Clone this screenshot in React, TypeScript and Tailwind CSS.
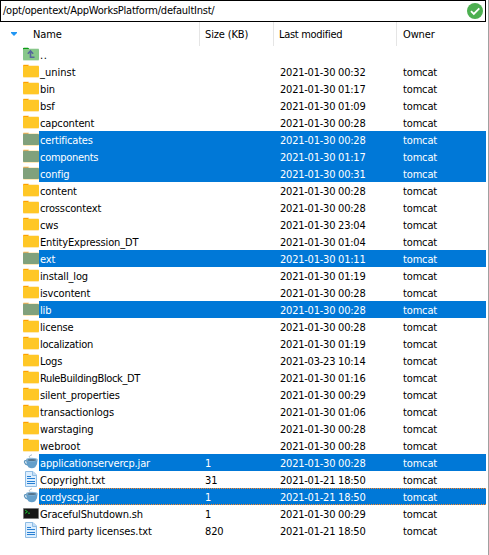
import React from "react";

type Kind = "up" | "folder" | "jar" | "text" | "shell";

interface Entry {
  name: string;
  kind: Kind;
  size?: string;
  modified?: string;
  selected?: boolean;
  focused?: boolean;
  tracking?: string;
}

const folder = (name: string, modified: string, selected = false, tracking = ""): Entry => ({
  name,
  kind: "folder",
  modified: modified.length > 5 ? modified : "2021-01-30 " + modified,
  selected,
  tracking,
});

const entries: Entry[] = [
  { name: "..", kind: "up", tracking: "tracking-[0.5px]" },
  folder("_uninst", "00:32", false, "tracking-[0px]"),
  folder("bin", "01:17"),
  folder("bsf", "01:09"),
  folder("capcontent", "00:28"),
  folder("certificates", "00:28", true, "tracking-[-0.2px]"),
  folder("components", "01:17", true, "tracking-[-0.3px]"),
  folder("config", "00:31", true),
  folder("content", "00:28"),
  folder("crosscontext", "00:28"),
  folder("cws", "23:04"),
  folder("EntityExpression_DT", "01:04"),
  folder("ext", "01:11", true),
  folder("install_log", "01:19"),
  folder("isvcontent", "00:28"),
  folder("lib", "00:28", true),
  folder("license", "00:28"),
  folder("localization", "01:19", false, "tracking-[-0.25px]"),
  folder("Logs", "2021-03-23 10:14"),
  folder("RuleBuildingBlock_DT", "01:16", false, "tracking-[-0.35px]"),
  folder("silent_properties", "00:29"),
  folder("transactionlogs", "01:06"),
  folder("warstaging", "00:28"),
  folder("webroot", "00:28", false, "tracking-[0px]"),
  { name: "applicationservercp.jar", kind: "jar", size: "1", modified: "2021-01-30 00:28", selected: true },
  { name: "Copyright.txt", kind: "text", size: "31", modified: "2021-01-21 18:50", tracking: "tracking-[0px]" },
  { name: "cordyscp.jar", kind: "jar", size: "1", modified: "2021-01-21 18:50", selected: true, focused: true },
  { name: "GracefulShutdown.sh", kind: "shell", size: "1", modified: "2021-01-30 00:29" },
  { name: "Third party licenses.txt", kind: "text", size: "820", modified: "2021-01-21 18:50", tracking: "tracking-[-0.1px]" },
];

function EntryIcon({ kind, selected }: { kind: Kind; selected?: boolean }) {
  return (
    <svg width="16" height="17" viewBox="0 0 16 17" className="block shrink-0">
      {kind === "folder" && (
        <>
          <path d="M0 3V2.3Q0 1.3 1 1.3H5.5L6.5 2.3H15Q16 2.3 16 3.3V14Q16 15 15 15H1Q0 15 0 14Z" fill="#ffe9b8" />
          <path d="M0 4V3Q0 2 1 2H5L6.2 3.2V4Z" fill={selected ? "#d9ac62" : "#ffa000"} />
          <path d="M0 3.6Q0 3 .7 3H15.3Q16 3 16 3.7V13.3Q16 14 15.3 14H.7Q0 14 0 13.3Z" fill={selected ? "#80a17c" : "#ffc726"} />
        </>
      )}
      {kind === "up" && (
        <>
          <path d="M6 2.3H15Q16 2.3 16 3.3V14Q16 15 15 15H1Q0 15 0 14V3H6Z" fill="#d3ead4" />
          <path d="M0 4V2.7Q0 1.7 1 1.7H5L6.2 3V4Z" fill="#0c9d15" />
          <path d="M0 3.6Q0 3 .7 3H15.3Q16 3 16 3.7V13.3Q16 14 15.3 14H.7Q0 14 0 13.3Z" fill="#87c78a" />
          <path d="M0 3Q0 2 1 2H5L6 3Z" fill="#0c9d15" />
          <path d="M7.5 6V11.3H11.5M4.8 7.7L7.5 5L10.2 7.7" fill="none" stroke="#56669b" strokeWidth="1.6" />
        </>
      )}
      {kind === "text" && (
        <>
          <path d="M2.5 .5H10L13.5 4V15.5H2.5Z" fill="#dceefe" stroke="#8fbce4" />
          <path d="M9.5 .5V4.5H13.5" fill="#c1def7" stroke="#8fbce4" />
          <path d="M4 5.5H8M4 7.5H12M4 10.5H12M4 12.5H12" stroke="#2880d4" />
        </>
      )}
      {kind === "shell" && (
        <>
          <rect y="3" width="16" height="11" fill="#a5a5a5" />
          <rect x=".7" y="3.7" width="14.6" height="9.6" fill="#171717" />
          <path d="M2 5L4.5 6.7L2 8.4M5 8.2H7" fill="none" stroke="#18bd2b" />
        </>
      )}
      {kind === "jar" && (
        <>
          <path d="M7 3.8Q5.6 2.8 6.8 1.8Q8 1 9 .8" fill="none" stroke="#a9b8c6" />
          <path d="M3.8 6.6H2.4Q1.2 6.8 1.6 8.6Q2.2 10.6 5 11" fill="none" stroke="#6197bd" strokeWidth="1.3" />
          <path d="M3 5.5H14.6Q14.7 10.5 12.2 13.2Q8.8 15.2 5.4 13.2Q3 10.5 3 5.5Z" fill="#659fca" />
          <ellipse cx="8.8" cy="5.6" rx="5.8" ry="1.9" fill="#8bb7d8" />
          <ellipse cx="8.8" cy="5.9" rx="4.3" ry="1" fill="#53748e" />
        </>
      )}
    </svg>
  );
}

function Row({ entry }: { entry: Entry }) {
  return (
    <div className="flex h-[17px] pl-[23px]">
      <EntryIcon kind={entry.kind} selected={entry.selected} />
      <div
        className={
          "grid h-[17px] w-[447px] grid-cols-[165px_75px_123px_1fr] whitespace-pre border-y pl-px leading-[17px] " +
          (entry.selected ? "bg-[#0078d7] text-white " : "text-black ") +
          (entry.focused ? "border-dotted border-[#ff8728]" : "border-transparent")
        }
      >
        <span className={entry.tracking}>{entry.name}</span>
        <span>{entry.size}</span>
        <span className="tracking-[-0.23px]">{entry.modified}</span>
        <span>{entry.modified ? "tomcat" : ""}</span>
      </div>
    </div>
  );
}

export default function App() {
  return (
    <div className="flex h-[555px] w-[489px] overflow-hidden bg-white font-['DejaVu_Sans_Condensed','DejaVu_Sans',sans-serif] text-[11px] tracking-[-0.15px] text-black [font-stretch:condensed]">
      <div className="w-[489px] border-r border-[#a0a0a0]">
        <div className="flex h-[22px] w-[486px] items-center justify-between border border-black pr-[2px] pl-[2px]">
          <span className="leading-[18px] tracking-[-0.23px]">/opt/opentext/AppWorksPlatform/defaultInst/</span>
          <svg width="16" height="16" viewBox="0 0 16 16">
            <circle cx="8" cy="8" r="8" fill="#4caf50" />
            <path d="M4 8.2L6.8 11L12.3 5.4" fill="none" stroke="white" strokeWidth="1.8" />
          </svg>
        </div>
        <div className="grid h-6 grid-cols-[200px_74px_123px_1fr] leading-[26px]">
          <div className="flex h-6 items-center border-r border-[#e5e5e5] pl-[11px]">
            <svg width="6" height="4" viewBox="0 0 6 4" className="mr-4">
              <path d="M0 0H6V1L3 4L0 1Z" fill="#2196f3" />
            </svg>
            <span className="pt-px">Name</span>
          </div>
          <div className="h-6 border-r border-[#e5e5e5] pl-[5px]">Size (KB)</div>
          <div className="h-6 border-r border-[#e5e5e5] pl-[5px] tracking-[-0.3px]">Last modified</div>
          <div className="pl-[6px]">Owner</div>
        </div>
        {entries.map((entry) => (
          <Row key={entry.name} entry={entry} />
        ))}
      </div>
    </div>
  );
}
